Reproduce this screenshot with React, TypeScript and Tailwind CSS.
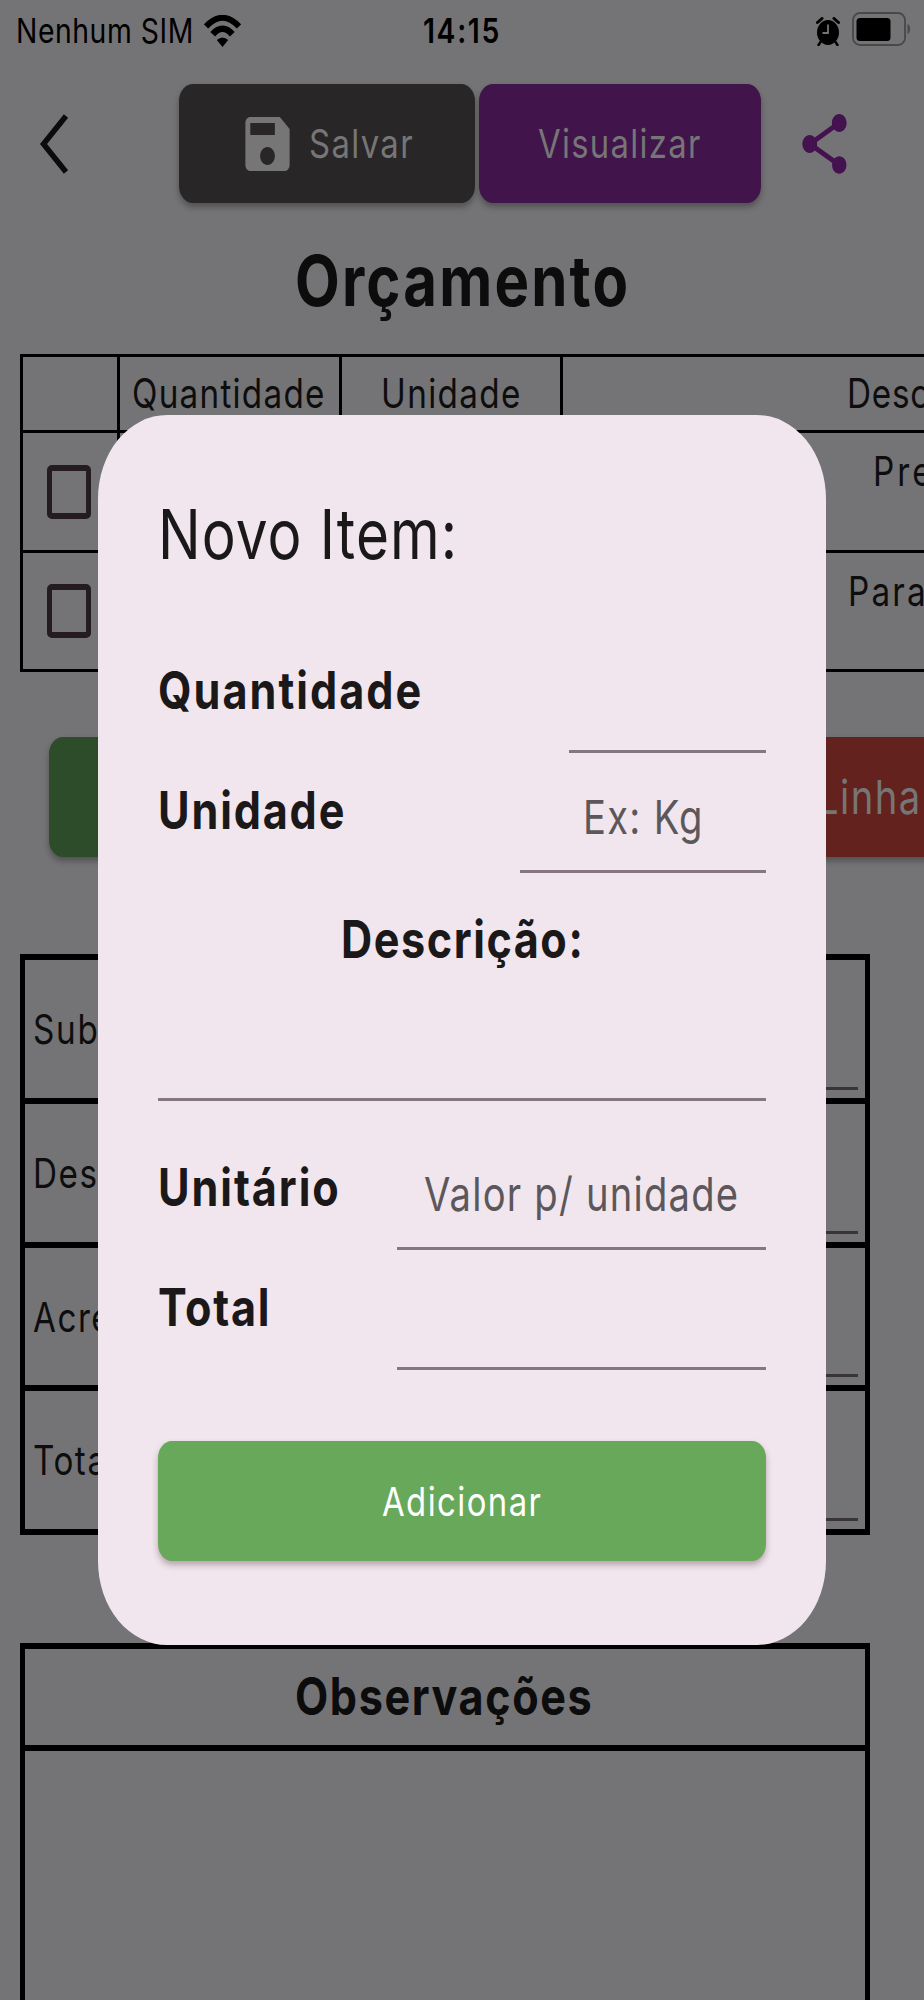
import { useLayoutEffect, useRef, useState, type ReactNode } from "react";
import clsx from "clsx";

type LabelProps = {
  width: number;
  condense?: number;
  className?: string;
  children: string;
};

// Condensed label: glyphs are squeezed horizontally and tracked to fill `width`
function Label({ width, condense = 0.8217, className, children }: LabelProps) {
  const ref = useRef<HTMLSpanElement>(null);
  const [spacing, setSpacing] = useState(0);

  useLayoutEffect(() => {
    if (!ref.current) return;
    const el = ref.current;
    el.style.letterSpacing = "0px";
    const natural = el.offsetWidth;
    const next = (width / condense - natural) / children.length;
    el.style.letterSpacing = `${next}px`;
    setSpacing(next);
  }, [width, condense, children]);

  return (
    <span className={clsx("block shrink-0 whitespace-nowrap text-left", className)} style={{ width }}>
      <span
        ref={ref}
        className="inline-block origin-left"
        style={{ letterSpacing: spacing, transform: `scaleX(${condense})` }}
      >
        {children}
      </span>
    </span>
  );
}

function StatusBar() {
  return (
    <div className="flex h-[62px] shrink-0 items-center text-[34.5px] text-black">
      <Label width={178} className="ml-[16px]">Nenhum SIM</Label>
      <svg className="ml-[10px] h-[32px] w-[37px]" viewBox="0 0 37 32" preserveAspectRatio="none">
        <path d="M2 11.5Q18.5-6 35 11.5" fill="none" stroke="#000" strokeWidth="6" />
        <path d="M8.7 19.2Q18.5 8.5 28.3 19.2" fill="none" stroke="#000" strokeWidth="6.5" />
        <path d="M12.8 25Q18.5 20 24.2 25L18.5 32Z" />
      </svg>
      <Label width={78} className="ml-[182px] font-semibold">14:15</Label>
      <svg className="ml-[315px] h-[29px] w-[24px]" viewBox="0 0 24 29">
        <ellipse cx="12" cy="15.5" rx="11" ry="12.5" />
        <path d="M1.5 5.5L6 1.5M22.5 5.5L18 1.5" stroke="#000" strokeWidth="3" strokeLinecap="round" />
        <path d="M4.5 25L2.5 28M19.5 25L21.5 28" stroke="#000" strokeWidth="2.5" strokeLinecap="round" />
        <path d="M12 7.5V16H6.5" fill="none" stroke="#747476" strokeWidth="1.8" />
      </svg>
      <svg className="mb-[4px] ml-[12px] h-[34px] w-[59px]" viewBox="0 0 59 34">
        <rect x="1" y="1" width="52" height="32" rx="7" fill="none" stroke="#48484a" strokeWidth="1.8" />
        <rect x="4.5" y="6" width="34" height="23" rx="3.5" />
        <path d="M55.5 12Q58 13 58 17T55.5 22Z" fill="#48484a" />
      </svg>
    </div>
  );
}

function Header() {
  return (
    <div className="flex h-[163px] shrink-0 items-center text-[40px] text-[#767676]">
      <svg className="ml-[39px] h-[60px] w-[30px]" viewBox="0 0 30 60">
        <path d="M27 2L4.5 30L27 58" fill="none" stroke="#0c0b0c" strokeWidth="5.5" />
      </svg>
      <button className="ml-[110px] flex h-[119px] w-[296px] items-center rounded-[14px/17px] bg-[#292627] pl-[59px] shadow-[0_4px_6px_rgba(0,0,0,0.3)]">
        <svg className="h-[72px] w-[59px]" viewBox="0 0 24 24" preserveAspectRatio="none" fill="currentColor">
          <path d="M17 3H5c-1.11 0-2 .9-2 2v14c0 1.1.89 2 2 2h14c1.1 0 2-.9 2-2V7l-4-4zm-5 16c-1.66 0-3-1.34-3-3s1.34-3 3-3 3 1.34 3 3-1.34 3-3 3zm3-10H5V5h10v4z" />
        </svg>
        <Label width={105} className="ml-[12px] pt-px">Salvar</Label>
      </button>
      <button className="ml-[4px] flex h-[119px] w-[282px] items-center justify-center rounded-[14px/17px] bg-[#41144b] shadow-[0_4px_6px_rgba(0,0,0,0.3)]">
        <Label width={164} className="pt-px">Visualizar</Label>
      </button>
      <svg className="ml-[34px] h-[72px] w-[59px]" viewBox="0 0 24 24" preserveAspectRatio="none" fill="#44124f">
        <path d="M18 16.08c-.76 0-1.44.3-1.96.77L8.91 12.7c.05-.23.09-.46.09-.7s-.04-.47-.09-.7l7.05-4.11c.54.5 1.25.81 2.04.81 1.66 0 3-1.34 3-3s-1.34-3-3-3-3 1.34-3 3c0 .24.04.47.09.7L8.04 9.81C7.5 9.31 6.79 9 6 9c-1.66 0-3 1.34-3 3s1.34 3 3 3c.79 0 1.5-.31 2.04-.81l7.12 4.16c-.05.21-.08.43-.08.65 0 1.61 1.31 2.92 2.92 2.92 1.61 0 2.92-1.31 2.92-2.92s-1.31-2.92-2.92-2.92z" />
      </svg>
    </div>
  );
}

function ItemRow({ name, width, className }: { name: string; width: number; className: string }) {
  return (
    <div className={clsx("flex border-t-[3px] border-black", className)}>
      <div className="flex w-[97px] shrink-0 items-center justify-center border-l-[3px] border-black pr-[2px]">
        <div className="h-[54px] w-[44px] rounded-[5px] border-x-[5px] border-y-[6px] border-[#241c1e]" />
      </div>
      <div className="w-[222px] shrink-0 border-l-[3px] border-black" />
      <div className="w-[221px] shrink-0 border-l-[3px] border-black" />
      <div className="flex w-[736px] shrink-0 justify-center border-l-[3px] border-black pr-[5px] leading-[77px]">
        <Label width={width}>{name}</Label>
      </div>
    </div>
  );
}

function ItemsTable() {
  return (
    <div className="mt-[18px] ml-[20px] w-[1276px] shrink-0 border-b-[3px] border-black text-[40.5px] text-[#0e0d0e]">
      <div className="flex h-[76px] border-t-[3px] border-black leading-[73px]">
        <div className="w-[97px] shrink-0 border-l-[3px] border-black" />
        <div className="flex w-[222px] shrink-0 justify-center border-l-[3px] border-black pr-[2px]">
          <Label width={194}>Quantidade</Label>
        </div>
        <div className="flex w-[221px] shrink-0 justify-center border-l-[3px] border-black">
          <Label width={141}>Unidade</Label>
        </div>
        <div className="flex w-[736px] shrink-0 justify-center border-l-[3px] border-black">
          <Label width={166}>Descrição</Label>
        </div>
      </div>
      <ItemRow name="Prego" width={108} className="h-[120px]" />
      <ItemRow name="Parafuso" width={158} className="h-[119px]" />
    </div>
  );
}

function TotalRow({ name, width }: { name: string; width: number }) {
  return (
    <div className="flex h-[143.8px] justify-between border-t-[6px] border-black pr-[7px] pl-[8px]">
      <Label width={width} className="leading-[139px]">{name}</Label>
      <div className="mb-[8px] w-[400px] border-b-[3px] border-[#3a3336]" />
    </div>
  );
}

type FieldProps = {
  label: string;
  width: number;
  className: string;
  children?: ReactNode;
};

function Field({ label, width, className, children }: FieldProps) {
  return (
    <div className="flex h-[120px] justify-between">
      <Label width={width} condense={0.83} className="leading-[116px] font-bold">{label}</Label>
      <div className={clsx("flex justify-center border-b-[3px] border-[#86777e] pt-[18px] text-[46.5px] leading-[92px] text-[#5c575b]", className)}>
        {children}
      </div>
    </div>
  );
}

function NewItemDialog() {
  return (
    <div className="absolute inset-0 flex items-start pt-[415px] pl-[98px]">
      <div className="flex h-[1229.5px] w-[728px] flex-col rounded-[69px/84px] bg-[#f1e6ed] px-[60px] text-[52px] text-[#1b1819]">
        <Label width={300} className="mt-[73px] text-[69px] leading-[92px]">Novo Item:</Label>
        <div className="mt-[53px] flex flex-col">
          <Field label="Quantidade" width={265} className="w-[197px]" />
          <Field label="Unidade" width={188} className="w-[246px]">
            <Label width={121}>Ex: Kg</Label>
          </Field>
        </div>
        <div className="flex h-[228px] flex-col items-center border-b-[3px] border-[#86777e]">
          <Label width={243} condense={0.83} className="mt-[28px] leading-[78px] font-bold">Descrição:</Label>
        </div>
        <div className="mt-[29px] flex flex-col">
          <Field label="Unitário" width={183} className="w-[369px]">
            <Label width={315}>Valor p/ unidade</Label>
          </Field>
          <Field label="Total" width={113} className="w-[369px]" />
        </div>
        <button className="mt-[71px] flex h-[120px] items-center justify-center rounded-[14px/17px] bg-[#67a85b] text-[40px] text-white shadow-[0_4px_6px_rgba(80,40,60,0.35)]">
          <Label width={160} className="pt-px">Adicionar</Label>
        </button>
      </div>
    </div>
  );
}

export default function App() {
  return (
    <div className="relative flex h-[2000px] w-[924px] flex-col overflow-hidden bg-[#747476] font-['Inter',sans-serif]">
      <StatusBar />
      <Header />
      <div className="flex h-[111px] shrink-0 items-center justify-center text-[70px] font-bold text-[#0d0c0d]">
        <Label width={335} condense={0.83}>Orçamento</Label>
      </div>
      <ItemsTable />
      <div className="mt-[65px] ml-[49px] flex h-[120px] w-[1000px] shrink-0 gap-[12px]">
        <div className="w-[420px] rounded-[14px/17px] bg-[#2d4c29] shadow-[0_4px_6px_rgba(0,0,0,0.3)]" />
        <div className="flex w-[568px] items-center rounded-[14px/17px] bg-[#63221e] pt-[2px] pl-[336px] text-[46.5px] text-[#767676] shadow-[0_4px_6px_rgba(0,0,0,0.3)]">
          <Label width={105}>Linha</Label>
        </div>
      </div>
      <div className="mt-[97px] ml-[20px] w-[850px] shrink-0 border-x-[5px] border-b-[6px] border-black text-[40.5px] text-[#0e0d0e]">
        <TotalRow name="Subtotal" width={144} />
        <TotalRow name="Desconto" width={163} />
        <TotalRow name="Acréscimo" width={180} />
        <TotalRow name="Total" width={84} />
      </div>
      <div className="mt-[108px] ml-[20px] h-[500px] w-[850px] shrink-0 border-x-[5px] border-t-[6px] border-black">
        <div className="flex h-[102px] items-center justify-center border-b-[6px] border-black pr-[2px] text-[52px] font-bold text-[#0d0c0d]">
          <Label width={298} condense={0.83}>Observações</Label>
        </div>
      </div>
      <NewItemDialog />
    </div>
  );
}
